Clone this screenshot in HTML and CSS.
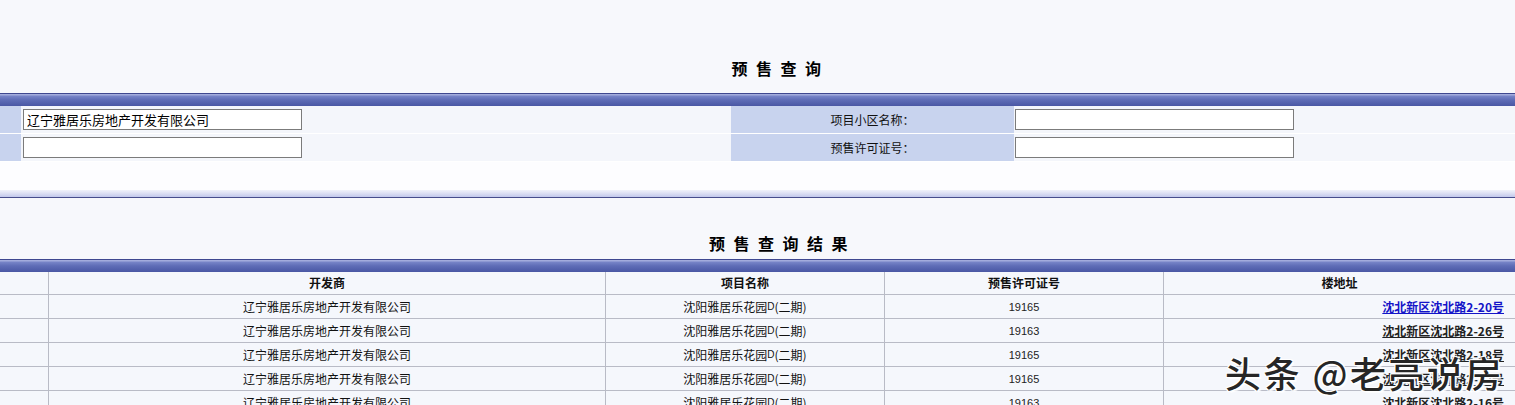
FILE: index.html
```html
<!DOCTYPE html>
<html lang="zh-CN">
<head>
<meta charset="utf-8">
<title>预售查询</title>
<link rel="stylesheet" href="styles.css">
</head>
<body>
<div class="page">
  <div class="head head-query"><h1 class="title">预售查询</h1></div>
  <div class="bar"></div>
  <div class="form">
    <div class="cell label"></div>
    <div class="cell field first"><input class="input" type="text" value="辽宁雅居乐房地产开发有限公司"></div>
    <div class="cell label">项目小区名称：</div>
    <div class="cell field"><input class="input" type="text" value=""></div>
    <div class="cell label"></div>
    <div class="cell field first"><input class="input" type="text" value=""></div>
    <div class="cell label">预售许可证号：</div>
    <div class="cell field"><input class="input" type="text" value=""></div>
  </div>
  <div class="spacer"></div>
  <div class="soft-bar"></div>
  <div class="head head-result"><h2 class="title">预售查询结果</h2></div>
  <div class="bar"></div>
  <div class="grid">
    <div class="row hrow">
      <div class="c"></div><div class="c">开发商</div><div class="c">项目名称</div><div class="c">预售许可证号</div><div class="c">楼地址</div>
    </div>
    <div class="row">
      <div class="c"></div><div class="c">辽宁雅居乐房地产开发有限公司</div><div class="c">沈阳雅居乐花园<span class="lat">D</span>(二期)</div><div class="c num">19165</div><div class="c addr"><a class="link new" href="#">沈北新区沈北路2-20号</a></div>
    </div>
    <div class="row">
      <div class="c"></div><div class="c">辽宁雅居乐房地产开发有限公司</div><div class="c">沈阳雅居乐花园<span class="lat">D</span>(二期)</div><div class="c num">19163</div><div class="c addr"><a class="link" href="#">沈北新区沈北路2-26号</a></div>
    </div>
    <div class="row">
      <div class="c"></div><div class="c">辽宁雅居乐房地产开发有限公司</div><div class="c">沈阳雅居乐花园<span class="lat">D</span>(二期)</div><div class="c num">19165</div><div class="c addr"><a class="link" href="#">沈北新区沈北路2-18号</a></div>
    </div>
    <div class="row">
      <div class="c"></div><div class="c">辽宁雅居乐房地产开发有限公司</div><div class="c">沈阳雅居乐花园<span class="lat">D</span>(二期)</div><div class="c num">19165</div><div class="c addr"><a class="link" href="#">沈北新区沈北路2-22号</a></div>
    </div>
    <div class="row">
      <div class="c"></div><div class="c">辽宁雅居乐房地产开发有限公司</div><div class="c">沈阳雅居乐花园<span class="lat">D</span>(二期)</div><div class="c num">19163</div><div class="c addr"><a class="link" href="#">沈北新区沈北路2-16号</a></div>
    </div>
  </div>
  <div class="watermark">头条 @老亮说房</div>
</div>
</body>
</html>
```

FILE: styles.css
```css
html, body {
  margin: 0;
  padding: 0;
}
body {
  background: #f7f8fc;
  font-family: "Noto Sans CJK SC", "Liberation Sans", sans-serif;
  font-size: 12px;
  color: #111;
  overflow: hidden;
}
.page {
  position: relative;
  width: 1515px;
  height: 405px;
  overflow: hidden;
}
.head {
  box-sizing: border-box;
  text-align: center;
}
.head-query {
  height: 93px;
  padding-top: 56px;
  padding-left: 46px;
}
.head-result {
  height: 61px;
  padding-top: 33px;
  padding-left: 50px;
}
.title {
  margin: 0;
  font-size: 16px;
  line-height: 24px;
  font-weight: bold;
  letter-spacing: 8.5px;
  color: #000;
}
.bar {
  height: 13px;
  box-sizing: border-box;
  border-top: 1px solid #3f4890;
  background: linear-gradient(#a3acdc 0, #a3acdc 1px, #7885c8 2px, #5e6cb6 6px, #4a57a4 12px);
}
.form {
  display: grid;
  grid-template-columns: 21px 710px 283px 1fr;
  grid-auto-rows: 27px;
  row-gap: 1px;
  background: #ffffff;
  padding-bottom: 1px;
}
.cell {
  background: #f4f6fb;
  display: flex;
  align-items: center;
}
.cell.label {
  background: #c8d3ee;
  justify-content: center;
  color: #111;
  line-height: 16px;
}
.cell.field {
  padding-left: 1px;
}
.cell.field.first {
  padding-left: 2px;
}
.input {
  box-sizing: border-box;
  width: 279px;
  height: 21px;
  margin: 0;
  padding: 0 3px;
  border: 1px solid #7b7b7b;
  background: #fff;
  font-family: "Noto Sans CJK SC", sans-serif;
  font-size: 13px;
  color: #000;
  outline: none;
}
.spacer {
  height: 28px;
  background: #fdfdff;
}
.soft-bar {
  height: 8px;
  box-sizing: border-box;
  border-bottom: 1px solid #484e8c;
  background: linear-gradient(#f2f3fb, #dfe2f4 3px, #c3c9ec);
}
.grid {
  background: #f5f7fc;
}
.row {
  display: grid;
  grid-template-columns: 48px 557px 279px 279px 1fr;
  height: 24px;
  box-sizing: border-box;
  border-bottom: 1px solid #b9bbc6;
}
.row.hrow {
  height: 23px;
  font-weight: bold;
}
.c {
  display: flex;
  align-items: center;
  justify-content: center;
  line-height: 16px;
  white-space: nowrap;
}
.c + .c {
  border-left: 1px solid #b9bbc6;
}
.lat {
  font-family: "Liberation Sans", sans-serif;
  font-size: 10px;
}
.num {
  font-family: "Liberation Sans", sans-serif;
  font-size: 11px;
  color: #222;
}
.addr {
  justify-content: flex-end;
  padding-right: 11px;
}
.link {
  color: #222;
  font-weight: bold;
  text-decoration: underline;
}
.link.new {
  color: #1414c8;
}
.watermark {
  position: absolute;
  left: 1225px;
  top: 349px;
  font-family: "Noto Sans CJK SC", sans-serif;
  font-size: 36px;
  font-weight: 500;
  line-height: 46px;
  letter-spacing: 2.5px;
  color: #262626;
  white-space: nowrap;
  text-shadow: 1px 1px 0 #fff, -1px -1px 0 #fff, 1px -1px 0 #fff, -1px 1px 0 #fff, 2px 2px 1px rgba(255,255,255,0.8);
}
```
